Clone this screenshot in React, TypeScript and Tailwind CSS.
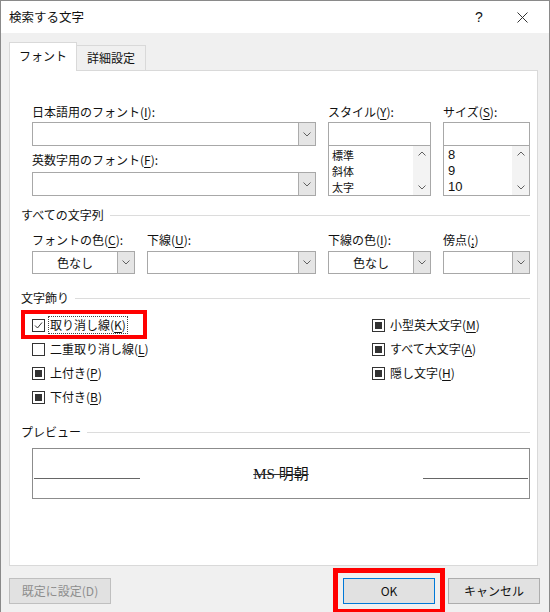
import React from 'react';

type CheckState = 'checked' | 'empty' | 'mixed';

function Chevron({ up }: { up?: boolean }) {
  return (
    <svg width="8" height="5" viewBox="0 0 8 5">
      <path
        d={up ? 'M0.5 4.5 L4 1 L7.5 4.5' : 'M0.5 0.5 L4 4 L7.5 0.5'}
        fill="none"
        stroke="#606060"
        strokeWidth="1"
      />
    </svg>
  );
}

function Key({ pre, k, post }: { pre: string; k: string; post: string }) {
  return (
    <span>
      {pre}
      <u className="underline-offset-2">{k}</u>
      {post}
    </span>
  );
}

function DropButton() {
  return (
    <div className="w-[17px] h-full border-l border-[#acacac] bg-[#e5e5e5] flex items-center justify-center">
      <Chevron />
    </div>
  );
}

function Combo({ text }: { text?: string }) {
  return (
    <div className="h-full w-full border border-[#a8a8a8] bg-white flex">
      <div className="flex-1 flex items-center justify-center text-[12px]">{text}</div>
      <DropButton />
    </div>
  );
}

function ListBox({ items, latin }: { items: string[]; latin?: boolean }) {
  return (
    <div className="h-[51px] -mt-px border border-[#a8a8a8] bg-white flex">
      <div
        className={
          latin
            ? "flex-1 pl-[4px] pt-px text-[13px] leading-4 font-['Liberation_Sans',sans-serif]"
            : 'flex-1 pl-[3px] pt-px text-[11px] leading-4'
        }
      >
        {items.map((it) => (
          <div key={it} className="h-4">
            {it}
          </div>
        ))}
      </div>
      <div className="w-[17px] bg-[#f3f3f3] flex flex-col items-center justify-between py-[5px]">
        <Chevron up />
        <Chevron />
      </div>
    </div>
  );
}

function Box({ state }: { state: CheckState }) {
  return (
    <div className="w-[13px] h-[13px] border border-[#333] bg-white flex items-center justify-center shrink-0">
      {state === 'checked' && (
        <svg width="9" height="9" viewBox="0 0 9 9">
          <path d="M1 4.5 L3.5 7 L8 1.5" fill="none" stroke="#333" strokeWidth="1" />
        </svg>
      )}
      {state === 'mixed' && <div className="w-[7px] h-[7px] bg-[#333]" />}
    </div>
  );
}

function Check({ state, pre, k }: { state: CheckState; pre: string; k: string }) {
  return (
    <div className="h-[24px] flex items-center gap-[5px]">
      <Box state={state} />
      <Key pre={pre} k={k} post=")" />
    </div>
  );
}

function Heading({ text }: { text: string }) {
  return (
    <div className="flex items-center gap-[6px] h-4 pr-[7px]">
      <span>{text}</span>
      <div className="flex-1 h-px bg-[#dcdcdc]" />
    </div>
  );
}

export default function App() {
  return (
    <div className="w-[550px] h-[612px] overflow-hidden bg-[#f0f0f0] border border-b-0 border-[#8a8a8a] text-[12px] leading-4 text-[#111] font-['Noto_Sans_CJK_JP','Noto_Sans',sans-serif]">
      {/* Title bar */}
      <div className="h-[32px] bg-white flex items-center pl-[8px]">
        <span className="text-[12.5px]">検索する文字</span>
        <span className="ml-auto w-[20px] text-center text-[14px] font-['Liberation_Sans',sans-serif]">?</span>
        <div className="w-[26px] ml-[20px] mr-[14px] flex justify-center">
          <svg width="11" height="11" viewBox="0 0 11 11">
            <path d="M0.5 0.5 L10.5 10.5 M10.5 0.5 L0.5 10.5" stroke="#333" strokeWidth="1" />
          </svg>
        </div>
      </div>

      {/* Tabs */}
      <div className="h-[37px] flex items-end pl-[8px] relative z-10">
        <div className="w-[68px] h-[29px] -mb-px bg-white border border-b-0 border-[#d9d9d9] flex items-center justify-center pb-[2px]">
          フォント
        </div>
        <div className="w-[69px] h-[25px] bg-[#f0f0f0] border border-l-0 border-b-0 border-[#d9d9d9] flex items-center justify-center">
          詳細設定
        </div>
      </div>

      {/* Panel */}
      <div className="ml-[8px] w-[529px] h-[496px] bg-white border border-[#d9d9d9] pl-[11px] pt-[33px]">
        {/* Font row */}
        <div className="pl-[11px] flex gap-[12px]">
          <div className="w-[284px]">
            <Key pre="日本語用のフォント(" k="I" post="):" />
            <div className="h-[24px] mt-[2px]">
              <Combo />
            </div>
            <div className="mt-[6px]">
              <Key pre="英数字用のフォント(" k="F" post="):" />
            </div>
            <div className="h-[24px] mt-[4px]">
              <Combo />
            </div>
          </div>
          <div className="w-[103px]">
            <Key pre="スタイル(" k="Y" post="):" />
            <div className="h-[24px] mt-[2px] border border-[#a8a8a8] bg-white" />
            <ListBox items={['標準', '斜体', '太字']} />
          </div>
          <div className="w-[87px]">
            <Key pre="サイズ(" k="S" post="):" />
            <div className="h-[24px] mt-[2px] border border-[#a8a8a8] bg-white" />
            <ListBox items={['8', '9', '10']} latin />
          </div>
        </div>

        {/* All text */}
        <div className="mt-[11px]">
          <Heading text="すべての文字列" />
        </div>
        <div className="mt-[9px] pl-[11px] flex gap-[12px]">
          <div className="w-[103px]">
            <Key pre="フォントの色(" k="C" post="):" />
            <div className="h-[23px] mt-[3px]">
              <Combo text="色なし" />
            </div>
          </div>
          <div className="w-[169px]">
            <Key pre="下線(" k="U" post="):" />
            <div className="h-[23px] mt-[3px]">
              <Combo />
            </div>
          </div>
          <div className="w-[103px]">
            <Key pre="下線の色(" k="I" post="):" />
            <div className="h-[23px] mt-[3px]">
              <Combo text="色なし" />
            </div>
          </div>
          <div className="w-[87px]">
            <Key pre="傍点(" k=";" post=")" />
            <div className="h-[23px] mt-[3px]">
              <Combo />
            </div>
          </div>
        </div>

        {/* Decoration */}
        <div className="mt-[16px]">
          <Heading text="文字飾り" />
        </div>
        <div className="mt-[7px] pl-[11px] grid grid-cols-[340px_1fr]">
          <div>
            <div className="relative h-[24px] flex items-center gap-[3px]">
              <Box state="checked" />
              <span className="border border-dotted border-[#444] px-px leading-[16px]">
                <Key pre="取り消し線(" k="K" post=")" />
              </span>
              <div className="absolute left-[-11px] top-[-3px] w-[126px] h-[29px] border-[4px] border-[#ff0000]" />
            </div>
            <Check state="empty" pre="二重取り消し線(" k="L" />
            <Check state="mixed" pre="上付き(" k="P" />
            <Check state="mixed" pre="下付き(" k="B" />
          </div>
          <div>
            <Check state="mixed" pre="小型英大文字(" k="M" />
            <Check state="mixed" pre="すべて大文字(" k="A" />
            <Check state="mixed" pre="隠し文字(" k="H" />
          </div>
        </div>

        {/* Preview */}
        <div className="mt-[15px]">
          <Heading text="プレビュー" />
        </div>
        <div className="mt-[8px] ml-[11px] w-[498px] h-[51px] border border-[#8c8c8c] px-px grid grid-cols-[1fr_auto_1fr] items-center">
          <div className="w-[106px] h-px mt-[10px] bg-[#666]" />
          <span className="text-[15px] leading-5 line-through decoration-[#333] font-['Liberation_Serif','Noto_Sans_CJK_JP',serif]">
            MS 明朝
          </span>
          <div className="justify-self-end w-[105px] h-px mt-[10px] bg-[#666]" />
        </div>
      </div>

      {/* Footer */}
      <div className="flex items-start pl-[8px] pt-[2px]">
        <button className="mt-[10px] w-[102px] h-[26px] bg-[#e1e1e1] border border-[#bfbfbf] text-[#8d8d8d] text-[12px]">
          既定に設定(D)
        </button>
        <div className="ml-auto border-[5px] border-[#ff0000] p-[5px]">
          <button className="w-[92px] h-[26px] bg-[#e1e1e1] border border-[#0078d7] text-[12px]">
            OK
          </button>
        </div>
        <button className="ml-[3px] mr-[9px] mt-[10px] w-[92px] h-[26px] bg-[#e1e1e1] border border-[#adadad] text-[12px]">
          キャンセル
        </button>
      </div>
    </div>
  );
}
